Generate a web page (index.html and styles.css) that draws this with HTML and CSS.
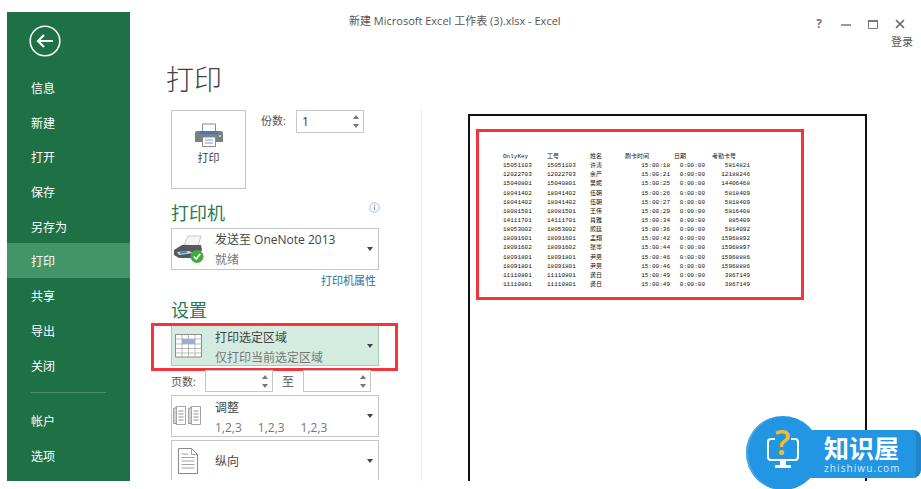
FILE: index.html
```html
<!DOCTYPE html>
<html lang="zh-CN">

<head>
    <meta charset="UTF-8" />
    <title>新建 Microsoft Excel 工作表 (3).xlsx - Excel</title>
    <link rel="stylesheet" href="styles.css">
</head>

<body>
    <div class="app">
        <nav class="sidebar">
            <div class="back-btn">
                <svg width="32" height="32" viewBox="0 0 32 32">
                    <circle cx="16" cy="16" r="14.8" fill="none" stroke="#fff" stroke-width="1.6" />
                    <path d="M24 16H9M15 10l-6 6 6 6" fill="none" stroke="#fff" stroke-width="2.2" />
                </svg>
            </div>
            <a class="nav-item">信息</a>
            <a class="nav-item">新建</a>
            <a class="nav-item">打开</a>
            <a class="nav-item">保存</a>
            <a class="nav-item">另存为</a>
            <a class="nav-item active">打印</a>
            <a class="nav-item">共享</a>
            <a class="nav-item">导出</a>
            <a class="nav-item">关闭</a>
            <div class="nav-sep"></div>
            <a class="nav-item">帐户</a>
            <a class="nav-item">选项</a>
        </nav>

        <main class="main">
            <header class="titlebar">
                <div class="doc-title">新建 Microsoft Excel 工作表 (3).xlsx - Excel</div>
                <div class="win-area">
                    <div class="win-btns">
                        <span class="win-help">?</span>
                        <svg width="12" height="12" viewBox="0 0 12 12"><path d="M1 7h10" stroke="#777" stroke-width="1.5" /></svg>
                        <svg width="12" height="12" viewBox="0 0 12 12"><path d="M1.5 2.5h9v8h-9z" fill="none" stroke="#777" /><path d="M1 3h10" stroke="#777" stroke-width="2" /></svg>
                        <svg width="12" height="12" viewBox="0 0 12 12"><path d="M2 2l8 8M10 2l-8 8" stroke="#666" stroke-width="1.6" /></svg>
                    </div>
                    <div class="login">登录</div>
                </div>
            </header>

            <h1 class="page-title">打印</h1>

            <div class="content">
                <section class="settings">
                    <div class="print-row">
                        <button class="print-btn">
                            <svg width="28" height="24" viewBox="0 0 28 24">
                                <path d="M7.5 1h13v8h-13z" fill="#fff" stroke="#8a8a8a" />
                                <path d="M2 8h24a2 2 0 0 1 2 2v9H0v-9a2 2 0 0 1 2-2z" fill="#7b7f86" />
                                <path d="M5 8h18v3H5z" fill="#3f78bb" />
                                <path d="M7.5 14h13v9.500h-13z" fill="#fff" stroke="#8a8a8a" />
                                <path d="M10 17h8M10 20h8" stroke="#6ea0d6" />
                                <circle cx="25" cy="13" r="1" fill="#ddd" />
                            </svg>
                            <span>打印</span>
                        </button>
                        <label class="copies-label">份数:</label>
                        <div class="spin spin-copies">
                            <span class="spin-val">1</span>
                            <span class="spin-arrows"><i class="up"></i><i class="down"></i></span>
                        </div>
                    </div>

                    <div class="section-head">
                        <h2>打印机</h2>
                        <svg class="info-icon" width="11" height="11" viewBox="0 0 11 11">
                            <circle cx="5.500" cy="5.500" r="4.700" fill="none" stroke="#9dbde6" />
                            <path d="M5.500 4.800v3.200" stroke="#6f9bd8" stroke-width="1.200" />
                            <circle cx="5.500" cy="3.200" r=".7" fill="#6f9bd8" />
                        </svg>
                    </div>
                    <div class="dropdown printer">
                        <svg class="dd-icon" width="32" height="32" viewBox="0 0 32 32">
                            <path d="M11 12l4-9h13l-3 10z" fill="#f4f4f4" stroke="#b5b5b5" stroke-width=".7" />
                            <path d="M1 17l8-5h19l1 5-6 8H6l-5-3z" fill="#55585d" />
                            <path d="M4 19l12-1 4 2-14 2z" fill="#d4d7db" />
                            <path d="M7 20l7-1" stroke="#2f7fc4" stroke-width="1.500" />
                            <circle cx="24" cy="23.500" r="6.500" fill="#3fae3c" />
                            <path d="M20.800 23.500l2.400 2.500 4-5" fill="none" stroke="#fff" stroke-width="1.800" />
                        </svg>
                        <div class="dd-text">
                            <div class="dd-main">发送至 OneNote 2013</div>
                            <div class="dd-sub">就绪</div>
                        </div>
                        <i class="caret"></i>
                    </div>
                    <a class="printer-link">打印机属性</a>

                    <h2 class="settings-head">设置</h2>
                    <div class="dropdown selected">
                        <svg class="dd-icon" width="28" height="24" viewBox="0 0 28 24">
                            <path d="M.5.500h26v22.500H.5z" fill="#fff" stroke="#8b8b8b" />
                            <path d="M7 5h13v5H7z" fill="#8fb2dd" />
                            <path d="M.5 5h26M.5 10h26M.5 14.500h26M.5 19h26M7 .5v22.500M13.500.5v22.500M20 .5v22.500" fill="none" stroke="#a9a9a9" stroke-width=".8" />
                        </svg>
                        <div class="dd-text">
                            <div class="dd-main">打印选定区域</div>
                            <div class="dd-sub">仅打印当前选定区域</div>
                        </div>
                        <i class="caret"></i>
                    </div>

                    <div class="pages-row">
                        <label>页数:</label>
                        <div class="spin spin-page"><span class="spin-arrows"><i class="up"></i><i class="down"></i></span></div>
                        <label class="pages-to">至</label>
                        <div class="spin spin-page"><span class="spin-arrows"><i class="up"></i><i class="down"></i></span></div>
                    </div>

                    <div class="dropdown">
                        <svg class="dd-icon" width="28" height="22" viewBox="0 0 28 22">
                            <g fill="#fff" stroke="#8f8f8f" stroke-width=".8">
                                <path d="M.5 3.500h10v15H.5z" />
                                <path d="M2 2.500h10v16H2z" />
                                <path d="M3.500 1.500h9v18h-9z" />
                                <path d="M15.500 3.500h10v15h-10z" />
                                <path d="M17 2.500h10v16H17z" />
                                <path d="M18.500 1.500h9v18h-9z" />
                            </g>
                            <path d="M5.500 6h5M5.500 9h5M5.500 12h5M5.500 15h5M20.500 6h5M20.500 9h5M20.500 12h5M20.500 15h5" stroke="#777" stroke-width=".8" />
                        </svg>
                        <div class="dd-text">
                            <div class="dd-main">调整</div>
                            <div class="dd-sub collate"><span>1,2,3</span><span>1,2,3</span><span>1,2,3</span></div>
                        </div>
                        <i class="caret"></i>
                    </div>

                    <div class="dropdown orient">
                        <svg class="dd-icon" width="20" height="26" viewBox="0 0 20 26">
                            <path d="M.5.500h13l6 6v19H.5z" fill="#fff" stroke="#8b8b8b" />
                            <path d="M13.500.5v6h6M3.500 6h7M3.500 9.500h13M3.500 13h13M3.500 16.500h13M3.500 20h13" fill="none" stroke="#8b8b8b" stroke-width=".8" />
                        </svg>
                        <div class="dd-text">
                            <div class="dd-main">纵向</div>
                        </div>
                        <i class="caret"></i>
                    </div>
                </section>

                <section class="preview">
                    <div class="sheet">
                        <div class="print-area">
                            <table class="punch-table">
                                <tr><td>OnlyKey</td><td>工号</td><td>姓名</td><td>刷卡时间</td><td class="head-date">日期</td><td class="head-card">考勤卡号</td></tr>
                                <tr><td>15051103</td><td>15051103</td><td>许涛</td><td class="num">15:00:18</td><td class="num">0:00:00</td><td class="num">5814821</td></tr>
                                <tr><td>12022703</td><td>12022703</td><td>余产</td><td class="num">15:00:21</td><td class="num">0:00:00</td><td class="num">12188246</td></tr>
                                <tr><td>15040801</td><td>15040801</td><td>吴妮</td><td class="num">15:00:25</td><td class="num">0:00:00</td><td class="num">14406468</td></tr>
                                <tr><td>18041402</td><td>18041402</td><td>伍朝</td><td class="num">15:00:26</td><td class="num">0:00:00</td><td class="num">5818409</td></tr>
                                <tr><td>18041402</td><td>18041402</td><td>伍朝</td><td class="num">15:00:27</td><td class="num">0:00:00</td><td class="num">5818409</td></tr>
                                <tr><td>18081501</td><td>18081501</td><td>王伟</td><td class="num">15:00:29</td><td class="num">0:00:00</td><td class="num">5816408</td></tr>
                                <tr><td>14111701</td><td>14111701</td><td>肖雅</td><td class="num">15:00:34</td><td class="num">0:00:00</td><td class="num">885409</td></tr>
                                <tr><td>18053002</td><td>18053002</td><td>熊廷</td><td class="num">15:00:36</td><td class="num">0:00:00</td><td class="num">5814092</td></tr>
                                <tr><td>18091601</td><td>18091601</td><td>孟翔</td><td class="num">15:00:42</td><td class="num">0:00:00</td><td class="num">15968892</td></tr>
                                <tr><td>18091602</td><td>18091602</td><td>张岑</td><td class="num">15:00:44</td><td class="num">0:00:00</td><td class="num">15968897</td></tr>
                                <tr><td>18091801</td><td>18091801</td><td>尹男</td><td class="num">15:00:46</td><td class="num">0:00:00</td><td class="num">15968886</td></tr>
                                <tr><td>18091801</td><td>18091801</td><td>尹男</td><td class="num">15:00:46</td><td class="num">0:00:00</td><td class="num">15968886</td></tr>
                                <tr><td>11110801</td><td>11110801</td><td>龚日</td><td class="num">15:00:49</td><td class="num">0:00:00</td><td class="num">3867149</td></tr>
                                <tr><td>11110801</td><td>11110801</td><td>龚日</td><td class="num">15:00:49</td><td class="num">0:00:00</td><td class="num">3867149</td></tr>
                            </table>
                        </div>
                    </div>
                </section>
            </div>
        </main>
    </div>

    <div class="logo">
        <div class="logo-bar">
            <div class="logo-name">知识屋</div>
            <div class="logo-url">zhishiwu.com</div>
        </div>
        <div class="logo-circle">
            <svg width="74" height="73" viewBox="0 0 74 73">
                <path d="M29 23h-4a3 3 0 0 0-3 3v15a3 3 0 0 0 3 3h24a3 3 0 0 0 3-3V26a3 3 0 0 0-3-3h-4" fill="none" stroke="#fff" stroke-width="2" />
                <path d="M34 44h6v5h5v3H29v-3h5z" fill="#fff" />
                <text x="36.500" y="39" class="logo-q">?</text>
            </svg>
        </div>
    </div>
</body>

</html>
```

FILE: styles.css
```css
body {
    margin: 0;
    padding: 0;
    width: 921px;
    height: 489px;
    overflow: hidden;
    position: relative;
    background: #fff;
    color: #444;
    font-family: "Open Sans", "Noto Sans CJK SC", sans-serif;
    font-size: 12px;
}

.app {
    display: flex;
    height: 469px;
    padding: 12px 0 8px 7px;
}

/* left green bar */
.sidebar {
    width: 123px;
    flex: none;
    background: #1e7145;
    color: #fff;
    display: flex;
    flex-direction: column;
}

.back-btn {
    height: 58px;
    padding: 13px 0 0 22px;
    box-sizing: border-box;
}

.nav-item {
    display: block;
    height: 34.7px;
    line-height: 37px;
    padding-left: 24px;
    font-size: 12px;
}

.nav-item.active {
    background: #439467;
}

.nav-sep {
    height: 1px;
    margin: 10px 24px 10px 24px;
    background: #4a9069;
}

.main {
    flex: 1;
    display: flex;
    flex-direction: column;
    min-width: 0;
}

.titlebar {
    height: 38px;
    display: flex;
    justify-content: space-between;
    flex: none;
}

.doc-title {
    padding: 0 0 0 219px;
    font-size: 11px;
    line-height: 18px;
    color: #555;
}

.win-area {
    width: 110px;
}

.win-btns {
    display: flex;
    align-items: center;
    gap: 15px;
    height: 18px;
    padding-top: 3px;
    padding-left: 2px;
}

.win-help {
    width: 12px;
    text-align: center;
    font-weight: 700;
    font-size: 12px;
    line-height: 12px;
    color: #777;
}

.login {
    font-size: 11px;
    line-height: 16px;
    margin-top: 1px;
    padding-left: 80px;
    color: #555;
}

.page-title {
    margin: 0;
    height: 60px;
    flex: none;
    padding-left: 36px;
    font-size: 28px;
    font-weight: 300;
    line-height: 58px;
    color: #444;
}

.content {
    flex: 1;
    display: flex;
    min-height: 0;
}

.settings {
    width: 292px;
    flex: none;
    box-sizing: border-box;
    padding-left: 41px;
    border-right: 1px solid #ececec;
}

.print-row {
    display: flex;
    align-items: flex-start;
    height: 79px;
}

.print-btn {
    width: 75px;
    height: 79px;
    padding: 12px 0 0;
    display: flex;
    flex-direction: column;
    align-items: center;
    gap: 2px;
    box-sizing: border-box;
    background: #fff;
    border: 1px solid #c6c6c6;
    font: inherit;
    font-size: 11px;
    color: #444;
}

.copies-label {
    margin: 1px 0 0 15px;
    width: 35px;
    font-size: 11px;
    line-height: 20px;
    color: #555;
}

.spin {
    position: relative;
    box-sizing: border-box;
    border: 1px solid #c6c6c6;
    background: #fff;
}

.spin-copies {
    width: 68px;
    height: 23px;
    padding-left: 5px;
    line-height: 21px;
    font-size: 12px;
    color: #333;
}

.spin-page {
    width: 68px;
    height: 22px;
}

.spin-arrows {
    position: absolute;
    top: 4px;
    right: 4px;
    display: flex;
    flex-direction: column;
    gap: 5px;
}

.spin-arrows i {
    display: block;
    width: 0;
    height: 0;
    border-left: 3px solid transparent;
    border-right: 3px solid transparent;
}

.spin-arrows .up {
    border-bottom: 4px solid #777;
}

.spin-arrows .down {
    border-top: 4px solid #777;
}

.section-head {
    display: flex;
    justify-content: space-between;
    align-items: flex-start;
    width: 209px;
    margin-top: 11px;
    height: 28px;
}

h2 {
    margin: 0;
    font-size: 18px;
    font-weight: 400;
    line-height: 26px;
    color: #2b7a50;
}

.info-icon {
    margin: 2px 0 0 0;
}

.dropdown {
    position: relative;
    display: flex;
    align-items: center;
    box-sizing: border-box;
    width: 208px;
    height: 42px;
    border: 1px solid #c6c6c6;
    background: #fff;
}

.dd-icon {
    flex: none;
    margin-left: 1px;
}

.dd-text {
    position: absolute;
    left: 43px;
    top: 2px;
}

.printer .dd-text,
.orient .dd-text {
    top: 1px;
}

.dd-main {
    font-size: 12px;
    line-height: 20px;
    margin-top: 0;
    color: #444;
}

.dd-sub {
    font-size: 12px;
    line-height: 20px;
    color: #777;
}

.caret {
    position: absolute;
    right: 5px;
    top: 18px;
    width: 0;
    height: 0;
    border-left: 3px solid transparent;
    border-right: 3px solid transparent;
    border-top: 4px solid #444;
}

.printer-link {
    display: block;
    width: 205px;
    text-align: right;
    font-size: 11px;
    line-height: 22px;
    color: #2b6ca3;
}

.settings-head {
    margin-top: 5px;
    height: 28px;
}

.dropdown.selected {
    height: 41px;
    background: #d3ecdf;
    border-color: #9dcfb3;
}

/* the red box somebody drew over the screenshot */
.dropdown.selected::after {
    content: "";
    position: absolute;
    left: -21px;
    right: -20px;
    top: -3px;
    bottom: -6px;
    border: 3px solid #f5333a;
}

.dropdown.selected .dd-icon {
    margin-left: 3px;
}

.pages-row {
    display: flex;
    align-items: center;
    height: 22px;
    margin-top: 4px;
    font-size: 11px;
    color: #555;
}

.pages-row label {
    width: 34px;
}

.pages-row .pages-to {
    width: 30px;
    padding-left: 9px;
    box-sizing: border-box;
    font-size: 12px;
}

.collate {
    display: flex;
    gap: 16px;
}

.pages-row + .dropdown {
    margin-top: 3px;
}

.orient {
    margin-top: 3px;
    height: 40px;
    border-bottom: none;
}

.orient .dd-icon {
    margin-left: 6px;
}

.orient .dd-main {
    line-height: 40px;
}

.preview {
    flex: 1;
    padding: 4px 0 0 46px;
    display: flex;
}

.sheet {
    width: 399px;
    box-sizing: border-box;
    border: 2px solid #111;
    border-bottom: none;
    padding: 13px 0 0 6px;
}

.print-area {
    width: 328px;
    height: 171px;
    box-sizing: border-box;
    border: 3px solid #f5333a;
    padding: 20px 0 0 24px;
}

.punch-table {
    border-collapse: collapse;
    table-layout: fixed;
    width: 247px;
    font-family: "Liberation Mono", "Noto Sans CJK SC", monospace;
    font-size: 6px;
    color: #111;
}

.punch-table td {
    box-sizing: border-box;
    padding: 0;
    height: 9.15px;
    line-height: 9px;
    white-space: nowrap;
    width: 44px;
}

.punch-table td:nth-child(2) {
    width: 43px;
}

.punch-table td:nth-child(3) {
    width: 35px;
}

.punch-table td:nth-child(4) {
    width: 45px;
}

.punch-table td:nth-child(5) {
    width: 35px;
}

.punch-table td:nth-child(6) {
    width: 45px;
}

.punch-table .num {
    text-align: right;
}

.punch-table .head-date {
    padding-left: 4px;
}

.punch-table .head-card {
    padding-left: 7px;
}

/* site watermark, bottom right */
.logo {
    position: absolute;
    left: 746px;
    top: 416px;
    width: 175px;
    height: 73px;
    overflow: hidden;
}

.logo-bar {
    position: absolute;
    left: 64px;
    top: 14px;
    width: 111px;
    height: 48px;
    box-sizing: border-box;
    padding: 6px 0 0 14px;
    background: #2396e3;
    border-right: 5px solid #1f85c8;
    border-radius: 0 8px 8px 0;
    color: #fff;
}

.logo-name {
    font-size: 25px;
    font-weight: 700;
    line-height: 25px;
}

.logo-url {
    font-size: 10px;
    line-height: 12px;
    margin-top: 1px;
    letter-spacing: 1.1px;
    color: #d6ecfb;
}

.logo-circle {
    position: absolute;
    left: 0;
    top: 0;
    width: 74px;
    height: 74px;
    border-radius: 50%;
    background: #2396e3;
    box-shadow: inset 2px 0 0 #4aa6e6;
}

.logo-q {
    font-family: "Open Sans", sans-serif;
    font-size: 34px;
    font-weight: 600;
    text-anchor: middle;
    fill: #f5b92e;
}
```
